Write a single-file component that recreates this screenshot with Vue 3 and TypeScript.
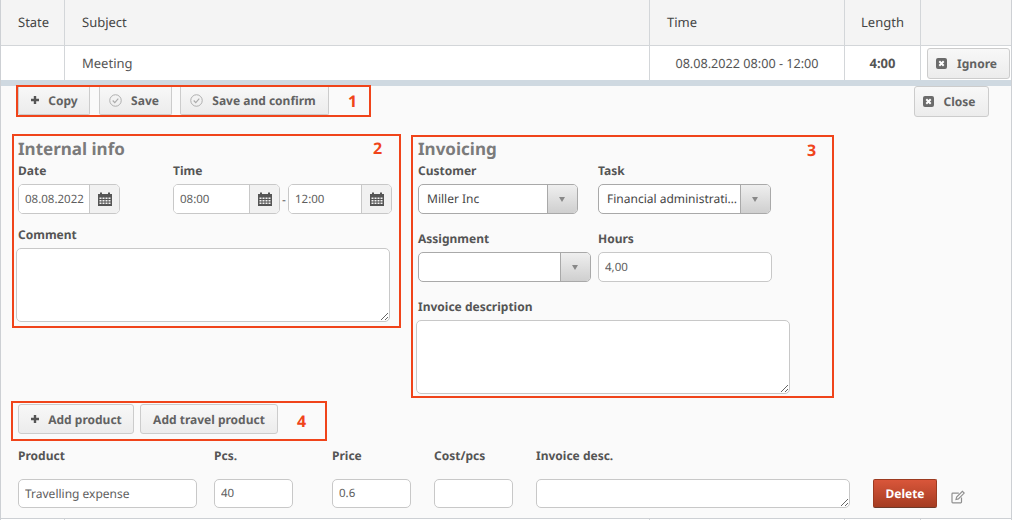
<script setup lang="ts">
interface Product { name: string; pcs: string; price: string; cost: string }
const product: Product = { name: 'Travelling expense', pcs: '40', price: '0.6', cost: '' }
</script>

<template>
  <div class="page">
    <div class="row head">
      <div class="cell">State</div>
      <div class="cell">Subject</div>
      <div class="cell">Time</div>
      <div class="cell center">Length</div>
      <div class="cell"></div>
    </div>
    <div class="row body">
      <div class="cell"></div>
      <div class="cell">Meeting</div>
      <div class="cell center when">08.08.2022 08:00 - 12:00</div>
      <div class="cell center strong">4:00</div>
      <div class="cell action">
        <button class="btn ignore">
          <svg class="ico" viewBox="0 0 11 11"><rect width="11" height="11" rx="2" fill="#6b6b6b" /><path d="M3.300 3.300l4.400 4.400M7.700 3.300L3.300 7.700" stroke="#fff" stroke-width="2" /></svg>
          Ignore
        </button>
      </div>
    </div>
    <div class="band"></div>

    <div class="panel">
      <div class="toolbar">
        <div class="tools annotated">
          <button class="btn tool copy">
            <svg class="ico plus" viewBox="0 0 10 10"><path d="M5 1v8M1 5h8" stroke="#555" stroke-width="2.4" /></svg>
            Copy
          </button>
          <button class="btn tool save">
            <svg class="ico check" viewBox="0 0 14 14"><circle cx="7" cy="7" r="6.2" fill="none" stroke="#aaa" /><path d="M4 7l2.2 2.3L10 5" fill="none" stroke="#aaa" stroke-width="1.2" /></svg>
            Save
          </button>
          <button class="btn tool confirm">
            <svg class="ico check" viewBox="0 0 14 14"><circle cx="7" cy="7" r="6.2" fill="none" stroke="#aaa" /><path d="M4 7l2.2 2.3L10 5" fill="none" stroke="#aaa" stroke-width="1.2" /></svg>
            Save and confirm
          </button>
          <span class="mark mark1">1</span>
          <span class="frame frame1"></span>
        </div>
        <button class="btn close">
          <svg class="ico" viewBox="0 0 11 11"><rect width="11" height="11" rx="2" fill="#6b6b6b" /><path d="M3.300 3.300l4.400 4.400M7.700 3.300L3.300 7.700" stroke="#fff" stroke-width="2" /></svg>
          Close
        </button>
      </div>

      <div class="columns">
        <section class="internal annotated">
          <h2>Internal info</h2>
          <div class="pair">
            <div class="date-field">
              <label>Date</label>
              <div class="addon-input date-w">
                <input class="digits" value="08.08.2022" />
                <span class="addon">
                  <svg viewBox="0 0 16 16" class="cal"><path d="M1 3h2V1.500h2V3h6V1.500h2V3h2v12H1z" fill="#555" /><path d="M2.500 6.500h2v1.500h-2zM5.500 6.500h2v1.500h-2zM8.500 6.500h2v1.500h-2zM11.500 6.500h2v1.500h-2zM2.500 9h2v1.500h-2zM5.500 9h2v1.500h-2zM8.500 9h2v1.500h-2zM11.500 9h2v1.500h-2zM2.500 11.500h2V13h-2zM5.500 11.500h2V13h-2zM8.500 11.500h2V13h-2zM11.500 11.500h2V13h-2z" fill="#f3f3f3" /></svg>
                </span>
              </div>
            </div>
            <div class="time-field">
              <label>Time</label>
              <div class="time-row">
                <div class="addon-input time-a">
                  <input class="digits" value="08:00" />
                  <span class="addon">
                    <svg viewBox="0 0 16 16" class="cal"><path d="M1 3h2V1.500h2V3h6V1.500h2V3h2v12H1z" fill="#555" /><path d="M2.500 6.500h2v1.500h-2zM5.500 6.500h2v1.500h-2zM8.500 6.500h2v1.500h-2zM11.500 6.500h2v1.500h-2zM2.500 9h2v1.500h-2zM5.500 9h2v1.500h-2zM8.500 9h2v1.500h-2zM11.500 9h2v1.500h-2zM2.500 11.500h2V13h-2zM5.500 11.500h2V13h-2zM8.500 11.500h2V13h-2zM11.500 11.500h2V13h-2z" fill="#f3f3f3" /></svg>
                  </span>
                </div>
                <span class="dash">-</span>
                <div class="addon-input time-b">
                  <input class="digits" value="12:00" />
                  <span class="addon">
                    <svg viewBox="0 0 16 16" class="cal"><path d="M1 3h2V1.500h2V3h6V1.500h2V3h2v12H1z" fill="#555" /><path d="M2.500 6.500h2v1.500h-2zM5.500 6.500h2v1.500h-2zM8.500 6.500h2v1.500h-2zM11.500 6.500h2v1.500h-2zM2.500 9h2v1.500h-2zM5.500 9h2v1.500h-2zM8.500 9h2v1.500h-2zM11.500 9h2v1.500h-2zM2.500 11.500h2V13h-2zM5.500 11.500h2V13h-2zM8.500 11.500h2V13h-2zM11.500 11.500h2V13h-2z" fill="#f3f3f3" /></svg>
                  </span>
                </div>
              </div>
            </div>
          </div>
          <label class="comment-label">Comment</label>
          <textarea class="comment"></textarea>
          <span class="mark mark2">2</span>
          <span class="frame frame2"></span>
        </section>

        <section class="invoicing annotated">
          <h2>Invoicing</h2>
          <div class="inv-grid">
            <div>
              <label>Customer</label>
              <div class="select customer"><span class="val">Miller Inc</span><span class="arrow"></span></div>
            </div>
            <div>
              <label>Task</label>
              <div class="select task"><span class="val">Financial administration</span><span class="arrow"></span></div>
            </div>
            <div class="second">
              <label>Assignment</label>
              <div class="select assignment"><span class="val"></span><span class="arrow"></span></div>
            </div>
            <div class="second">
              <label>Hours</label>
              <input class="plain hours digits" value="4,00" />
            </div>
          </div>
          <label class="inv-desc-label">Invoice description</label>
          <textarea class="inv-desc"></textarea>
          <span class="mark mark3">3</span>
          <span class="frame frame3"></span>
        </section>
      </div>

      <div class="adders annotated">
        <button class="btn add">
          <svg class="ico plus" viewBox="0 0 10 10"><path d="M5 1v8M1 5h8" stroke="#555" stroke-width="2.4" /></svg>
          Add product
        </button>
        <button class="btn add travel">Add travel product</button>
        <span class="mark mark4">4</span>
        <span class="frame frame4"></span>
      </div>

      <div class="products">
        <label>Product</label>
        <label>Pcs.</label>
        <label>Price</label>
        <label>Cost/pcs</label>
        <label>Invoice desc.</label>
        <span></span>
        <span></span>
        <input class="plain p-name" :value="product.name" />
        <input class="plain p-num digits" :value="product.pcs" />
        <input class="plain p-num digits" :value="product.price" />
        <input class="plain p-num" :value="product.cost" />
        <textarea class="p-desc"></textarea>
        <button class="delete">Delete</button>
        <svg class="edit" viewBox="0 0 14 14"><path d="M10.500 7.500v4.500a.8.8 0 0 1-.8.8H1.800a.8.8 0 0 1-.8-.8V4a.8.8 0 0 1 .8-.8h6" fill="none" stroke="#8f8f8f" stroke-width="1.200" /><path d="M5 9.500l.6-2.400 5.800-5.800 1.800 1.800-5.800 5.800z" fill="none" stroke="#8f8f8f" stroke-width="1.100" /></svg>
      </div>
    </div>

    <div class="row foot">
      <div class="cell"></div>
      <div class="cell"></div>
      <div class="cell"></div>
      <div class="cell"></div>
      <div class="cell"></div>
    </div>
  </div>
</template>

<style scoped>
.page {
  width: 1012px;
  height: 520px;
  box-sizing: border-box;
  border-left: 1px solid #cdd0d4;
  border-right: 1px solid #cdd0d4;
  overflow: hidden;
  font-family: "Noto Sans", "Open Sans", sans-serif;
  font-size: 12px;
  color: #555;
  background: #fff;
  text-rendering: geometricPrecision;
}
.row {
  display: grid;
  grid-template-columns: 64px 585px 195px 76px 90px;
}
.cell {
  box-sizing: border-box;
  border-right: 1px solid #d3d6d9;
  padding: 0 17px;
  display: flex;
  align-items: center;
}
.cell:last-child { border-right: none; }
.head {
  height: 46px;
  background: #f4f4f4;
  border-bottom: 1px solid #d3d6d9;
  box-sizing: border-box;
  font-size: 13px;
  color: #444;
}
.head .cell { padding-bottom: 2px; }
.head .center { padding: 0 0 2px; }
.body { height: 34px; font-size: 13px; color: #555; }
.center { justify-content: center; padding: 0; }
.when { font-size: 12.65px; }
.strong { font-weight: 700; }
.action { padding: 0 0 0 6px; align-items: flex-start; }
.band { height: 6px; background: #cfd9e1; }
.panel { background: #fafafa; height: 432px; }
.foot { height: 2px; border-top: 1px solid #cdd0d4; box-sizing: border-box; }

.btn {
  font-family: inherit;
  text-rendering: inherit;
  font-size: 12px;
  font-weight: 700;
  color: #626262;
  border: 1px solid #ccc;
  border-radius: 3px;
  background: linear-gradient(#f8f8f8, #ececec);
  display: inline-flex;
  align-items: center;
  justify-content: center;
  padding: 0;
  box-sizing: border-box;
}
.ico { width: 11px; height: 11px; margin-right: 10px; flex: none; }
.ico.plus { width: 10px; height: 10px; margin-right: 8px; }
.ico.check { width: 13px; height: 13px; margin-right: 9px; }
.ignore { width: 83px; height: 31px; margin-top: 2px; padding-right: 4px; }
.close { width: 75px; height: 31px; padding-right: 5px; }

.annotated { position: relative; }
.frame {
  position: absolute;
  border: 2px solid #f0441a;
  box-sizing: border-box;
  pointer-events: none;
}
.mark {
  position: absolute;
  color: #f0441a;
  font-size: 16px;
  font-weight: 700;
  line-height: 20px;
}

.toolbar {
  height: 31px;
  display: flex;
  justify-content: space-between;
  padding: 0 22px 0 17px;
}
.tools { display: flex; height: 29px; }
.tool { height: 29px; border-radius: 0 0 2px 2px; border-top: none; }
.copy { width: 72px; margin-right: 9px; }
.save { width: 73px; margin-right: 8px; padding-right: 3px; }
.confirm { width: 149px; padding-right: 3px; }
.frame1 { left: -2px; top: -1px; width: 355px; height: 32px; }
.mark1 { left: 330px; top: 5px; }

.columns {
  display: flex;
  margin-top: 19px;
  padding-left: 14px;
  align-items: flex-start;
}
h2 {
  margin: 0;
  height: 26px;
  line-height: 25px;
  font-size: 17px;
  font-weight: 700;
  color: #7b7b7b;
  padding-left: 3px;
}
label {
  display: block;
  height: 18px;
  line-height: 18px;
  margin-bottom: 4px;
  font-weight: 700;
  font-size: 12px;
  color: #555;
}
input, textarea {
  font-family: inherit;
  text-rendering: inherit;
  font-size: 12px;
  color: #5e5e5e;
  box-sizing: border-box;
  background: #fff;
  outline: none;
}
input.digits { font-size: 11.5px; }
.internal { width: 384px; height: 189px; margin-right: 15px; }
.frame2 { left: -3px; top: -2px; width: 389px; height: 194px; }
.mark2 { left: 358px; top: 2px; }
.pair { display: flex; padding-left: 3px; }
.date-field { width: 155px; }
.time-row { display: flex; align-items: center; }
.addon-input {
  display: flex;
  height: 30px;
  box-sizing: border-box;
  border: 1px solid #c8c8c8;
  border-radius: 5px;
  overflow: hidden;
  background: #fff;
}
.addon-input input {
  flex: 1;
  min-width: 0;
  border: none;
  padding: 0 0 0 6px;
  height: 28px;
}
.addon {
  width: 30px;
  flex: none;
  border-left: 1px solid #c8c8c8;
  background: #f1f1f1;
  display: flex;
  align-items: center;
  justify-content: center;
  box-sizing: border-box;
}
.cal { width: 16px; height: 16px; }
.date-w { width: 102px; }
.time-a { width: 107px; }
.time-b { width: 104px; }
.dash { width: 8px; text-align: center; }
.comment-label { margin: 12px 0 4px 3px; }
.comment {
  display: block;
  width: 374px;
  height: 74px;
  margin-left: 1px;
  border: 1px solid #c8c8c8;
  border-radius: 5px;
  resize: both;
}

.invoicing { width: 418px; height: 259px; margin-top: 1px; }
.frame3 { left: -3px; top: -2px; width: 423px; height: 263px; }
.mark3 { left: 393px; top: 3px; }
.invoicing h2 { height: 25px; line-height: 23px; padding-left: 4px; }
.inv-grid {
  display: grid;
  grid-template-columns: 180px 200px;
  padding-left: 4px;
}
.second { margin-top: 16px; }
.select {
  display: flex;
  height: 30px;
  box-sizing: border-box;
  border: 1px solid #a9a9a9;
  border-radius: 5px;
  overflow: hidden;
  background: #fff;
}
.customer { width: 160px; }
.task { width: 173px; }
.assignment { width: 173px; }
.val {
  flex: 1;
  min-width: 0;
  padding: 0 2px 0 8px;
  line-height: 28px;
  white-space: nowrap;
  overflow: hidden;
  text-overflow: ellipsis;
  color: #444;
}
.arrow {
  width: 30px;
  flex: none;
  border-left: 1px solid #a9a9a9;
  background: linear-gradient(#efefef, #cfcfcf);
  position: relative;
  box-sizing: border-box;
}
.arrow::after {
  content: "";
  position: absolute;
  left: 11px;
  top: 12px;
  border-left: 3px solid transparent;
  border-right: 3px solid transparent;
  border-top: 5px solid #888;
}
.plain {
  height: 30px;
  border: 1px solid #c8c8c8;
  border-radius: 5px;
  padding: 0 6px;
  display: block;
}
.hours { width: 174px; }
.inv-desc-label { margin: 16px 0 4px 4px; }
.inv-desc {
  display: block;
  width: 374px;
  height: 74px;
  margin-left: 2px;
  border: 1px solid #c8c8c8;
  border-radius: 5px;
  resize: both;
}

.adders {
  display: flex;
  height: 34px;
  width: 310px;
  margin: 8px 0 0 13px;
  padding-left: 4px;
  box-sizing: border-box;
}
.add { height: 30px; }
.adders .add:first-child { width: 116px; margin-right: 6px; }
.travel { width: 138px; }
.frame4 { left: -3px; top: -3px; width: 316px; height: 40px; }
.mark4 { left: 283px; top: 7px; }

.products {
  display: grid;
  grid-template-columns: 196px 118px 102px 102px 337px 78px auto;
  grid-template-rows: 32px 30px;
  margin: 9px 0 0 17px;
  align-items: start;
}
.products .plain { height: 29px; }
.p-name { width: 179px; }
.p-num { width: 79px; }
.p-desc {
  display: block;
  width: 314px;
  height: 29px;
  border: 1px solid #c8c8c8;
  border-radius: 5px;
  resize: both;
}
.delete {
  width: 64px;
  height: 29px;
  border: 1px solid #9c3a20;
  border-bottom-color: #6d3a2a;
  border-radius: 2px;
  background: linear-gradient(#d9563a, #a53c22);
  color: #fff;
  font-family: inherit;
  text-rendering: inherit;
  font-size: 12px;
  font-weight: 700;
  padding: 0;
}
.edit { width: 14px; height: 14px; margin-top: 11px; }
</style>
